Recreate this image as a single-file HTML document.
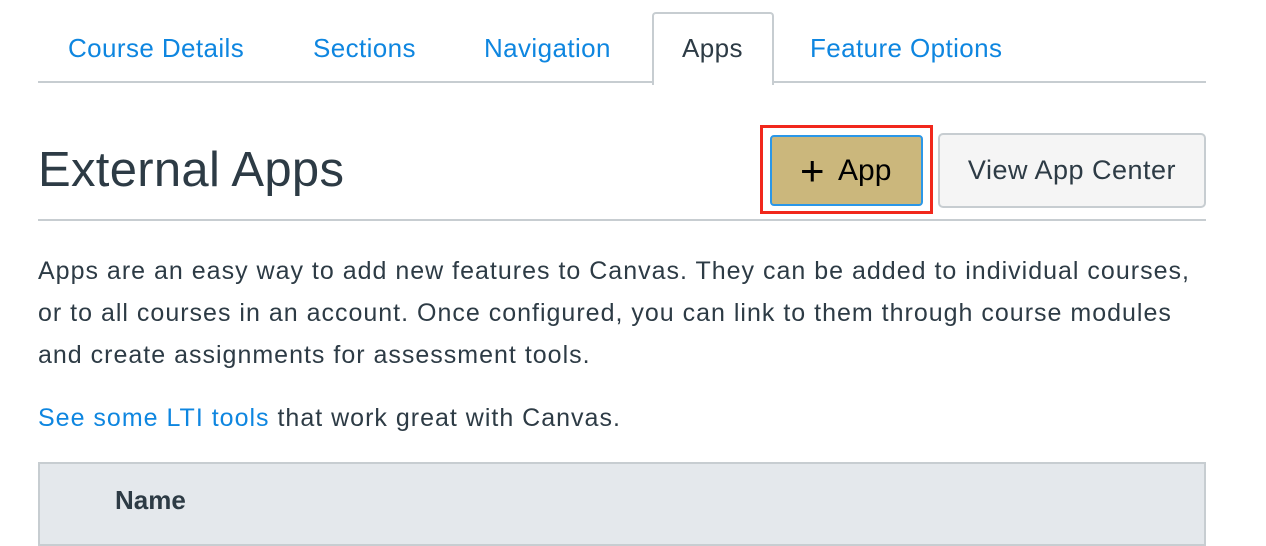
<!DOCTYPE html>
<html><head><style>
body{margin:0;width:1266px;height:536px;background:#fff;font-family:"Liberation Sans",sans-serif;position:relative;overflow:hidden;color:#2d3b45}
.a{position:absolute;white-space:nowrap}
.tab{position:absolute;top:31px;font-size:26px;letter-spacing:0.4px;color:#0e86e0;line-height:34px}
</style></head><body>
<div class="a" style="left:38px;top:81px;width:1168px;height:2px;background:#c7cdd1"></div>
<div class="a" style="left:652px;top:12px;width:118px;height:71px;border:2px solid #c7cdd1;border-bottom:none;border-radius:4px 4px 0 0;background:#fff"></div>
<div class="tab" style="left:68px">Course Details</div>
<div class="tab" style="left:313px">Sections</div>
<div class="tab" style="left:484px">Navigation</div>
<div class="tab" style="left:682px;color:#2d3b45">Apps</div>
<div class="tab" style="left:810px">Feature Options</div>
<div class="a" style="left:38px;top:140px;font-size:49px;letter-spacing:0.3px;line-height:60px">External Apps</div>
<div class="a" style="left:38px;top:219px;width:1168px;height:2px;background:#c7cdd1"></div>
<div class="a" style="left:760px;top:125px;width:167px;height:83px;border:3px solid #f1281c"></div>
<div class="a" style="left:770px;top:135px;width:149px;height:67px;border:2px solid #2b97e8;border-radius:4px;background:#cbb77c;font-size:30px;line-height:67px;color:#000"><span style="position:absolute;left:28px;top:0;font-size:42px;font-weight:300">+</span><span style="position:absolute;left:66px;top:0">App</span></div>
<div class="a" style="left:938px;top:133px;width:264px;height:71px;border:2px solid #c7cdd1;border-radius:5px;background:#f5f5f5;font-size:27px;letter-spacing:0.5px;line-height:71px;text-align:center">View App Center</div>
<div class="a" style="left:38px;top:250px;font-size:25px;letter-spacing:1px;line-height:42px">Apps are an easy way to add new features to Canvas. They can be added to individual courses,<br>or to all courses in an account. Once configured, you can link to them through course modules<br>and create assignments for assessment tools.</div>
<div class="a" style="left:38px;top:400px;font-size:25px;letter-spacing:1px;line-height:36px"><span style="color:#0e86e0">See some LTI tools</span> that work great with Canvas.</div>
<div class="a" style="left:38px;top:462px;width:1164px;height:80px;border:2px solid #c7cdd1;background:#e4e8ec"></div>
<div class="a" style="left:115px;top:485px;font-size:26px;font-weight:bold;line-height:30px">Name</div>
</body></html>
